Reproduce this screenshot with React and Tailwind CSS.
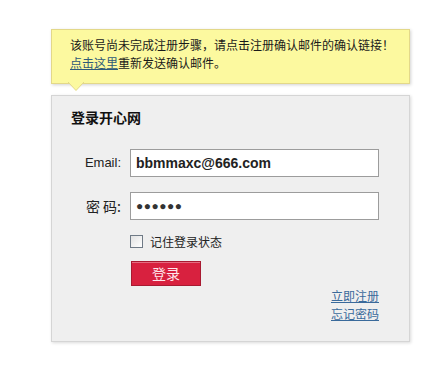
import React from "react";

function Tip() {
  return (
    <div className="relative w-[359px] h-[55px] border border-[#e3d889] bg-[#fcf99f] pl-[18px] pt-[6px] text-[12px] leading-[18px] text-[#1a1a1a] shadow-[1px_1px_3px_rgba(0,0,0,0.18)] font-['Noto_Sans_CJK_SC',sans-serif]">
      <p>该账号尚未完成注册步骤，请点击注册确认邮件的确认链接！</p>
      <p>
        <a href="#" className="text-[#2f5a78] underline">点击这里</a>
        重新发送确认邮件。
      </p>
      {/* pointer */}
      <svg className="absolute left-[16px] top-full -mt-[1px]" width="16" height="9" viewBox="0 0 16 9">
        <polygon points="0,0 16,0 8,8.5" fill="#fcf99f" />
        <polyline points="0,0 8,8.5 16,0" fill="none" stroke="#e3d889" strokeWidth="1" />
      </svg>
    </div>
  );
}

export default function App() {
  return (
    <div className="w-[422px] h-[378px] bg-white pt-[29px] pl-[51px] font-['Liberation_Sans',Arial,'Noto_Sans_CJK_SC',sans-serif]">
      <Tip />
      <div className="mt-[11px] w-[359px] h-[247px] border border-[#d5d5d5] bg-[#efefef] pt-[11px] pl-[19px] shadow-[1px_1px_3px_rgba(0,0,0,0.15)]">
        <h2 className="text-[14px] leading-[20px] font-bold text-[#111] font-['Noto_Sans_CJK_SC',sans-serif]">登录开心网</h2>

        <div className="mt-[22px] flex items-center">
          <label className="w-[50px] text-right text-[13px] text-[#222]">Email:</label>
          <input
            readOnly
            value="bbmmaxc@666.com"
            className="ml-[9px] w-[249px] h-[28px] border border-[#9c9c9c] bg-white pl-[5px] text-[14px] font-bold text-[#222] outline-none font-['Liberation_Sans',Arial,sans-serif]"
          />
        </div>

        <div className="mt-[15px] flex items-center">
          <label className="w-[50px] text-right text-[14px] text-[#222] font-['Noto_Sans_CJK_SC',sans-serif]">密 码:</label>
          <input
            readOnly
            value="●●●●●●"
            className="ml-[9px] w-[249px] h-[28px] border border-[#9c9c9c] bg-white pl-[5px] text-[12px] tracking-[0.5px] text-[#333] outline-none font-['Liberation_Sans',Arial,sans-serif]"
          />
        </div>

        <div className="mt-[15px] ml-[59px] flex items-center gap-[7px] h-[13px]">
          <span className="w-[13px] h-[13px] border border-[#6f7a86] bg-gradient-to-br from-[#e2e2e2] to-white" />
          <span className="text-[12px] text-[#222] font-['Noto_Sans_CJK_SC',sans-serif]">记住登录状态</span>
        </div>

        <button className="mt-[13px] ml-[60px] w-[70px] h-[25px] border border-[#a81a31] bg-[#d8213f] shadow-[inset_0_1px_0_rgba(255,255,255,0.35)] text-[14px] text-[#ffe6ec] font-['Noto_Sans_CJK_SC',sans-serif]">
          登录
        </button>

        <div className="mt-[1px] w-[308px] flex flex-col items-end text-[12px] leading-[18px] text-[#3a6a9b] font-['Noto_Sans_CJK_SC',sans-serif]">
          <a href="#" className="underline">立即注册</a>
          <a href="#" className="underline">忘记密码</a>
        </div>
      </div>
    </div>
  );
}
